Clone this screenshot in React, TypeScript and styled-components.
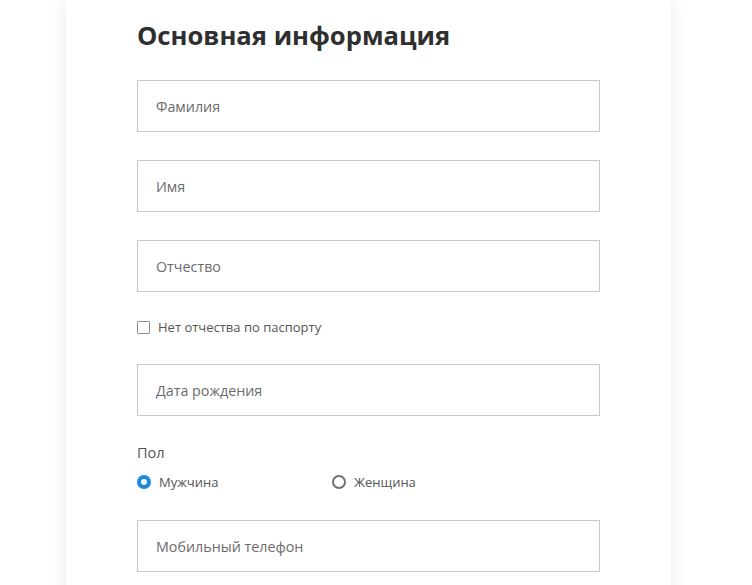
import React from "react";
import styled, { createGlobalStyle } from "styled-components";

const Global = createGlobalStyle`
  html, body {
    margin: 0;
    padding: 0;
    background: #ffffff;
    font-family: "Open Sans", "Liberation Sans", sans-serif;
    overflow: hidden;
  }
`;

const Page = styled.div`
  width: 752px;
  height: 585px;
  overflow: hidden;
`;

const Card = styled.div`
  margin-left: 66px;
  width: 605px;
  min-height: 620px;
  box-sizing: border-box;
  padding: 19px 71px 0;
  background: #fff;
  box-shadow: 0 0 18px rgba(0, 0, 0, 0.09);
`;

const Title = styled.h1`
  margin: 0 0 27px;
  font-size: 25.6px;
  line-height: 34px;
  font-weight: 700;
  color: #2f2f2f;
`;

const Field = styled.input<{ $gap?: number }>`
  display: block;
  width: 463px;
  height: 52px;
  box-sizing: border-box;
  margin: 0 0 ${(p) => p.$gap ?? 28}px;
  padding: 0 18px;
  border: 1px solid #c8c8c8;
  border-radius: 0;
  font-family: inherit;
  font-size: 14.3px;
  color: #333;
  outline: none;
  &::placeholder {
    color: #6b6b6b;
  }
`;

const CheckRow = styled.label`
  display: flex;
  align-items: center;
  height: 20px;
  margin: 0 0 27px;
  font-size: 13px;
  color: #555;
`;

const Box = styled.span`
  width: 13px;
  height: 13px;
  box-sizing: border-box;
  border: 1px solid #8f8f8f;
  border-radius: 1px;
  margin-right: 8px;
`;

const GroupLabel = styled.div`
  height: 20px;
  line-height: 20px;
  font-size: 14.5px;
  color: #555;
  margin: 0 0 9px;
`;

const RadioRow = styled.div`
  display: flex;
  height: 20px;
  margin: 0 0 28px;
`;

const RadioOption = styled.label`
  display: flex;
  align-items: center;
  width: 195px;
  font-size: 13px;
  color: #555;
`;

const Dot = styled.span<{ $on?: boolean }>`
  width: 14px;
  height: 14px;
  box-sizing: border-box;
  border-radius: 50%;
  margin-right: 8px;
  border: ${(p) => (p.$on ? "4px solid #1a88e0" : "2px solid #707070")};
  background: #fff;
`;

export default function App() {
  return (
    <Page>
      <Global />
      <Card>
        <Title>Основная информация</Title>
        <Field placeholder="Фамилия" />
        <Field placeholder="Имя" />
        <Field placeholder="Отчество" $gap={25} />
        <CheckRow>
          <Box />
          Нет отчества по паспорту
        </CheckRow>
        <Field placeholder="Дата рождения" $gap={27} />
        <GroupLabel>Пол</GroupLabel>
        <RadioRow>
          <RadioOption>
            <Dot $on />
            Мужчина
          </RadioOption>
          <RadioOption>
            <Dot />
            Женщина
          </RadioOption>
        </RadioRow>
        <Field placeholder="Мобильный телефон" />
      </Card>
    </Page>
  );
}
